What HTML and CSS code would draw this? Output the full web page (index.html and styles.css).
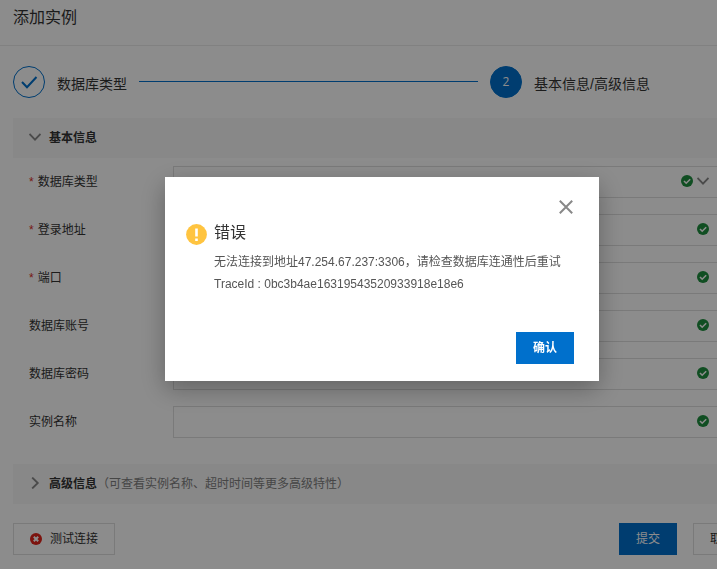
FILE: index.html
```html
<!DOCTYPE html>
<html lang="zh-CN">
<head>
<meta charset="utf-8">
<meta name="viewport" content="width=device-width, initial-scale=1">
<title>添加实例</title>
<link rel="stylesheet" href="styles.css">
</head>
<body>
<svg class="sprite" aria-hidden="true">
  <symbol id="ok" viewBox="0 0 12 12"><circle cx="6" cy="6" r="6" fill="#1e8e3e"/><path d="M3 6l2.200 2.200L9.200 4.200" fill="none" stroke="#fff" stroke-width="1.600"/></symbol>
  <symbol id="down" viewBox="0 0 12 12"><path d="M.5 3L6 8.600l5.500-5.600" fill="none" stroke="#888" stroke-width="1.800"/></symbol>
  <symbol id="right" viewBox="0 0 12 12"><path d="M3.200.5L8.800 6l-5.600 5.500" fill="none" stroke="#888" stroke-width="1.800"/></symbol>
</svg>
<main class="drawer">
  <header class="title-bar"><h1>添加实例</h1></header>
  <div class="content">
    <ol class="steps">
      <li class="step step-done">
        <span class="step-node"><svg width="18" height="18" viewBox="0 0 18 18"><path d="M2 9l5 5.200L16.500 4" fill="none" stroke="#0070cc" stroke-width="2"/></svg></span>
        <span class="step-label">数据库类型</span>
        <span class="step-line"></span>
      </li>
      <li class="step step-current">
        <span class="step-node">2</span>
        <span class="step-label">基本信息/高级信息</span>
      </li>
    </ol>
    <form class="form">
      <h2 class="section"><svg class="arrow"><use href="#down"/></svg>基本信息</h2>
      <div class="fields">
        <div class="field required">
          <label for="type">数据库类型</label>
          <div class="control"><select id="type"><option></option></select><span class="marks"><svg><use href="#ok"/></svg><svg><use href="#down"/></svg></span></div>
        </div>
        <div class="field required">
          <label for="host">登录地址</label>
          <div class="control"><input id="host" type="text"><span class="marks"><svg><use href="#ok"/></svg></span></div>
        </div>
        <div class="field required">
          <label for="port">端口</label>
          <div class="control"><input id="port" type="text"><span class="marks"><svg><use href="#ok"/></svg></span></div>
        </div>
        <div class="field">
          <label for="user">数据库账号</label>
          <div class="control"><input id="user" type="text"><span class="marks"><svg><use href="#ok"/></svg></span></div>
        </div>
        <div class="field">
          <label for="password">数据库密码</label>
          <div class="control"><input id="password" type="password"><span class="marks"><svg><use href="#ok"/></svg></span></div>
        </div>
        <div class="field">
          <label for="name">实例名称</label>
          <div class="control"><input id="name" type="text"><span class="marks"><svg><use href="#ok"/></svg></span></div>
        </div>
      </div>
      <h2 class="section"><svg class="arrow"><use href="#right"/></svg>高级信息<span class="hint">（可查看实例名称、超时时间等更多高级特性）</span></h2>
      <div class="actions">
        <button class="btn btn-test" type="button"><svg viewBox="0 0 12 12"><circle cx="6" cy="6" r="6" fill="#e2231a"/><path d="M3.800 3.800l4.400 4.400M8.200 3.800L3.800 8.200" stroke="#fff" stroke-width="2"/></svg>测试连接</button>
        <button class="btn btn-primary" type="button">提交</button>
        <button class="btn" type="button">取消</button>
      </div>
    </form>
  </div>
</main>
<div class="overlay">
  <section class="dialog" role="alertdialog" aria-modal="true" aria-labelledby="dialog-title">
    <button class="close" type="button" aria-label="关闭"><svg width="14" height="14" viewBox="0 0 14 14"><path d="M.8.8l12.400 12.400M13.200.8L.8 13.200" stroke="#888" stroke-width="2"/></svg></button>
    <div class="message">
      <svg class="warning" width="21" height="21" viewBox="0 0 21 21"><circle cx="10.500" cy="10.500" r="10.400" fill="#ffc440"/><path d="M9.200 4.500h2.600v8H9.200zM9.200 14.400h2.600V17H9.200z" fill="#fff"/></svg>
      <div>
        <h2 id="dialog-title">错误</h2>
        <p>无法连接到地址47.254.67.237:3306，请检查数据库连通性后重试</p>
        <p>TraceId : 0bc3b4ae16319543520933918e18e6</p>
      </div>
    </div>
    <button class="btn btn-primary confirm" type="button">确认</button>
  </section>
</div>
</body>
</html>
```
FILE: styles.css
```css
* { box-sizing: border-box; }

body {
  margin: 0;
  overflow: hidden;
  background: #fff;
  color: #333;
  font: 12px/20px "Liberation Sans", "Noto Sans CJK SC", sans-serif;
}

h1, h2, p, ol { margin: 0; padding: 0; }
.sprite { display: none; }

/* The drawer runs past the right edge of the window. */
.drawer { width: calc(100% + 47px); }

.title-bar {
  padding: 6px 13px 15px;
  border-bottom: 1px solid #ebebeb;
}
.title-bar h1 { font-size: 16px; line-height: 24px; font-weight: 400; }

.content { padding: 20px 13px 14px; }

.steps { display: flex; list-style: none; font-size: 14px; }
.step { display: flex; align-items: center; gap: 12px; }
.step-done { flex: 1; margin-right: 12px; }
.step-current { flex: 0 0 261px; }
.step-node {
  display: flex;
  align-items: center;
  justify-content: center;
  width: 32px;
  height: 32px;
  border: 1px solid #0070cc;
  border-radius: 50%;
}
.step-current .step-node {
  background: #0070cc;
  color: #fff;
  font-family: "Open Sans", sans-serif;
  font-size: 12px;
}
.step-label { padding-top: 3px; }
.step-line { flex: 1; height: 1px; margin-bottom: 1px; background: #0070cc; }

.form { padding-top: 20px; }
.section {
  display: flex;
  align-items: center;
  height: 40px;
  padding: 0 16px;
  background: #f7f7f7;
  font-size: 12px;
  font-weight: 700;
}
.arrow { width: 12px; height: 12px; margin: 0 8px 2px 0; }
.hint { color: #808080; font-weight: 400; }

.fields {
  display: grid;
  gap: 16px;
  padding: 8px 16px 26px;
}
.field { display: grid; grid-template-columns: 144px 1fr; align-items: center; }
.required label::before { content: "*"; margin-right: 4px; color: #d93026; }
.control { position: relative; height: 32px; }
.control input, .control select {
  display: block;
  width: 100%;
  height: 32px;
  margin: 0;
  padding: 0 60px 0 8px;
  border: 1px solid #dedede;
  border-radius: 0;
  background: #fff;
  appearance: none;
  font: inherit;
}
.marks {
  position: absolute;
  top: 9px;
  right: 26px;
  display: flex;
  gap: 4px;
  pointer-events: none;
}
.marks svg { width: 12px; height: 12px; }

.actions { display: flex; gap: 16px; padding-top: 19px; }
.btn {
  display: flex;
  align-items: center;
  gap: 8px;
  height: 32px;
  padding: 0 16px;
  border: 1px solid #dedede;
  background: #fff;
  color: #333;
  font: inherit;
}
.btn svg { width: 12px; height: 12px; }
.btn-test { margin-right: auto; }
.btn-primary { border-color: #0070cc; background: #0070cc; color: #fff; }

.overlay {
  position: fixed;
  inset: 0;
  display: flex;
  align-items: center;
  justify-content: center;
  padding: 0 0 11px 47px;
  background: rgba(0, 0, 0, 0.45);
}
.dialog {
  display: flex;
  flex-direction: column;
  width: 434px;
  padding: 16px 25px 17px 21px;
  background: #fff;
  box-shadow: 0 8px 24px rgba(0, 0, 0, 0.3);
}
.close {
  display: flex;
  align-self: flex-end;
  padding: 7px 1px;
  border: 0;
  background: none;
}
.message { display: flex; gap: 7px; padding-bottom: 37px; color: #555; }
.message h2 { margin-bottom: 6px; color: #333; font-size: 16px; line-height: 24px; font-weight: 400; }
.message p { line-height: 22px; }
.warning { flex: none; margin-top: 3px; }
.confirm { align-self: flex-end; font-weight: 700; }
```
